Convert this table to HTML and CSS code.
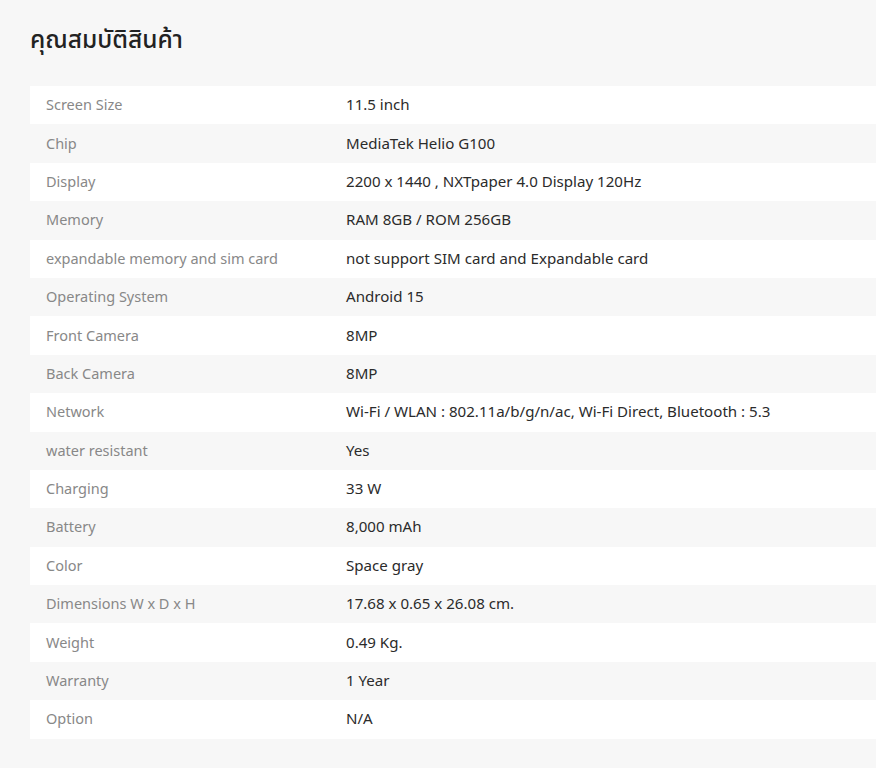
FILE: index.html
```html
<!DOCTYPE html>
<html lang="th">
<head>
<meta charset="utf-8">
<link rel="stylesheet" href="styles.css">
</head>
<body>
<section class="specs">
  <h2 class="specs-title">คุณสมบัติสินค้า</h2>
  <div class="spec-table">
    <div class="row"><div class="label">Screen Size</div><div class="value">11.5 inch</div></div>
    <div class="row"><div class="label">Chip</div><div class="value">MediaTek Helio G100</div></div>
    <div class="row"><div class="label">Display</div><div class="value">2200 x 1440 , NXTpaper 4.0 Display 120Hz</div></div>
    <div class="row"><div class="label">Memory</div><div class="value">RAM 8GB / ROM 256GB</div></div>
    <div class="row"><div class="label">expandable memory and sim card</div><div class="value">not support SIM card and Expandable card</div></div>
    <div class="row"><div class="label">Operating System</div><div class="value">Android 15</div></div>
    <div class="row"><div class="label">Front Camera</div><div class="value">8MP</div></div>
    <div class="row"><div class="label">Back Camera</div><div class="value">8MP</div></div>
    <div class="row"><div class="label">Network</div><div class="value">Wi-Fi / WLAN : 802.11a/b/g/n/ac, Wi-Fi Direct, Bluetooth : 5.3</div></div>
    <div class="row"><div class="label">water resistant</div><div class="value">Yes</div></div>
    <div class="row"><div class="label">Charging</div><div class="value">33 W</div></div>
    <div class="row"><div class="label">Battery</div><div class="value">8,000 mAh</div></div>
    <div class="row"><div class="label">Color</div><div class="value">Space gray</div></div>
    <div class="row"><div class="label">Dimensions W x D x H</div><div class="value">17.68 x 0.65 x 26.08 cm.</div></div>
    <div class="row"><div class="label">Weight</div><div class="value">0.49 Kg.</div></div>
    <div class="row"><div class="label">Warranty</div><div class="value">1 Year</div></div>
    <div class="row"><div class="label">Option</div><div class="value">N/A</div></div>
  </div>
</section>
</body>
</html>
```
FILE: styles.css
```css
html, body {
  margin: 0;
  padding: 0;
  background: #f7f7f7;
}
body {
  font-family: "Noto Sans", "Noto Sans Thai", sans-serif;
  color: #333333;
}
.specs {
  padding: 21px 0 0 30px;
}
.specs-title {
  margin: 0 0 29px 0;
  font-size: 24.5px;
  font-weight: 500;
  line-height: 36px;
  color: #222222;
}
.spec-table {
  display: flex;
  flex-direction: column;
}
.row {
  display: grid;
  grid-template-columns: 316px 1fr;
  height: 38.4px;
  box-sizing: border-box;
  padding-bottom: 2px;
  align-items: center;
}
.row:nth-child(odd) {
  background: #ffffff;
}
.label {
  padding-left: 16px;
  font-size: 14.5px;
  color: #888888;
}
.value {
  font-size: 15.1px;
  color: #2b2b2b;
}
```
